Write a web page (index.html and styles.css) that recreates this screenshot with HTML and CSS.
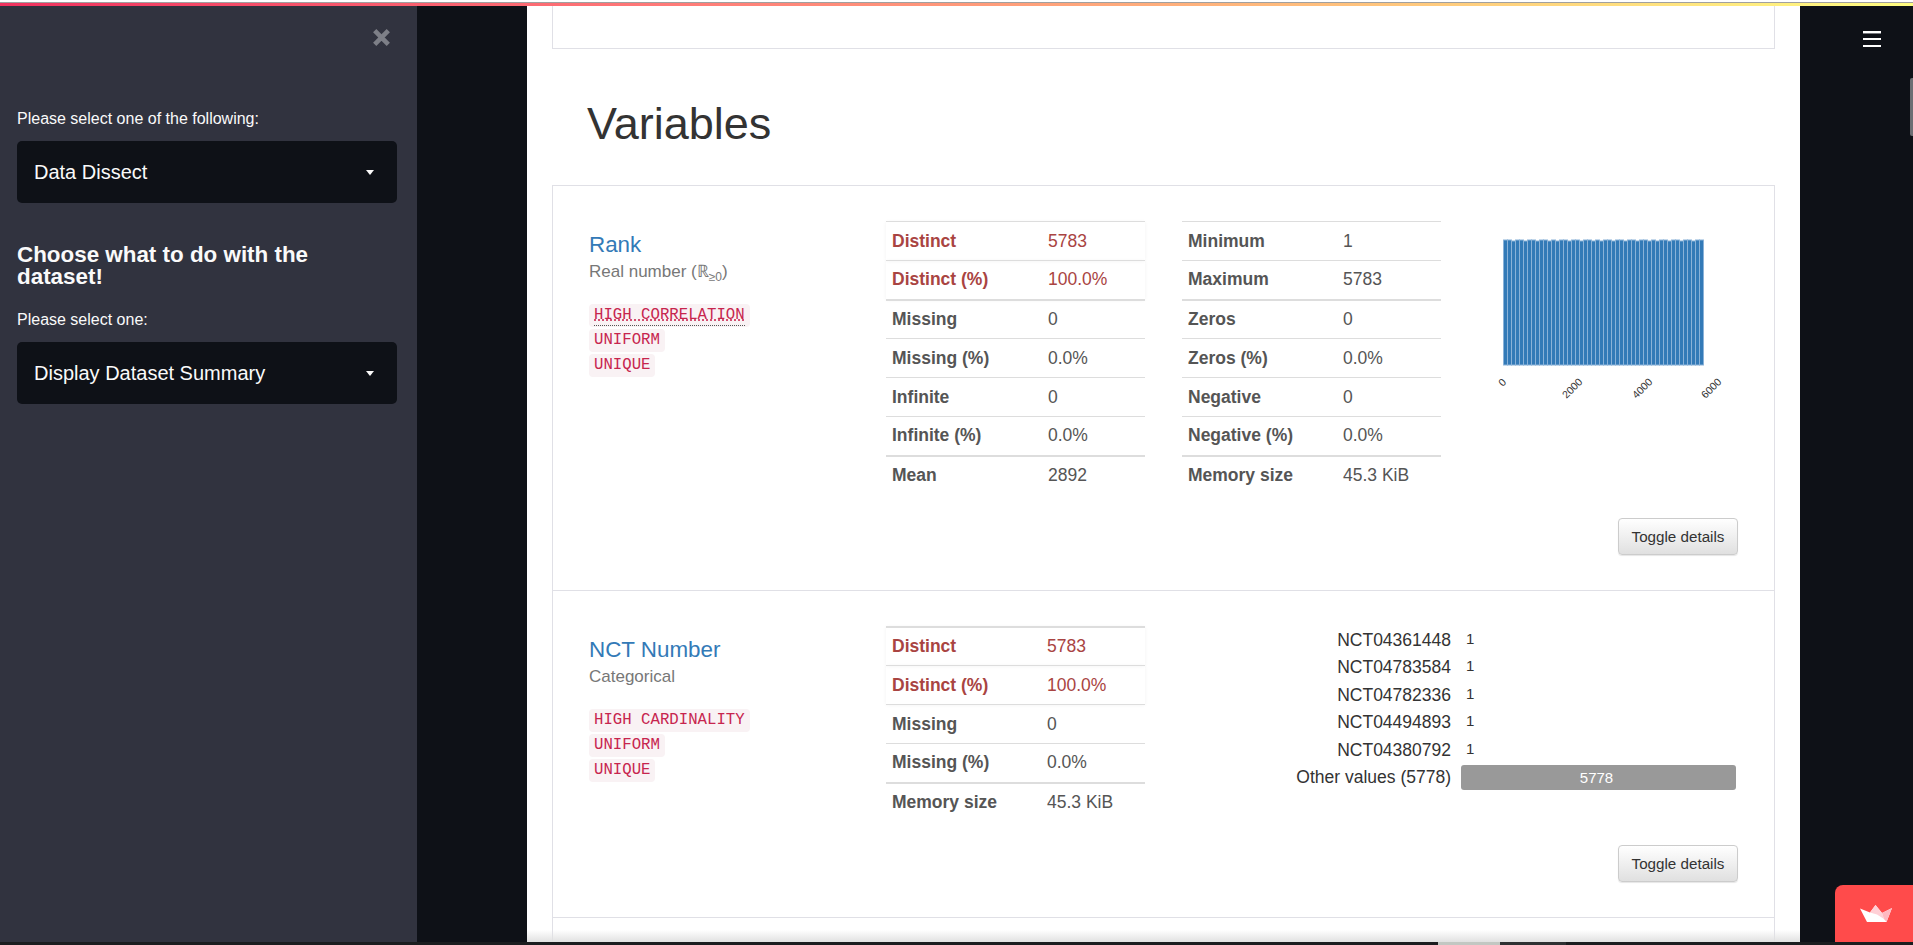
FILE: index.html
```html
<!DOCTYPE html>
<html lang="en">
<head>
    <meta charset="UTF-8">
    <meta name="viewport" content="width=device-width, initial-scale=1.0">
    <title>Data Dissect</title>
    <link rel="stylesheet" href="styles.css">
</head>
<body>
    <div class="top-line"></div>

    <div class="app">
        <aside class="sidebar">
            <div class="sidebar-close">
                <svg width="17" height="17" viewBox="0 0 17 17">
                    <path d="M1.7 1.7 15.3 15.3M15.3 1.7 1.7 15.3" stroke="#7d7f87" stroke-width="4.6" fill="none"/>
                </svg>
            </div>
            <p class="field-label first-label">Please select one of the following:</p>
            <div class="select-box">
                <span>Data Dissect</span>
                <i class="select-arrow"></i>
            </div>
            <h3 class="sidebar-title">Choose what to do with the dataset!</h3>
            <p class="field-label">Please select one:</p>
            <div class="select-box">
                <span>Display Dataset Summary</span>
                <i class="select-arrow"></i>
            </div>
        </aside>

        <div class="gutter-left"></div>

        <main class="report">
            <div class="old-card"></div>
            <h1 class="report-title">Variables</h1>

            <div class="card">
                <!-- Rank -->
                <section class="variable">
                    <div class="variable-grid">
                        <div class="variable-info">
                            <a class="variable-name" href="#">Rank</a>
                            <div class="variable-type">Real number (ℝ<sub>≥0</sub>)</div>
                            <div class="badges">
                                <code class="badge"><abbr>HIGH CORRELATION</abbr></code>
                                <code class="badge">UNIFORM</code>
                                <code class="badge">UNIQUE</code>
                            </div>
                        </div>
                        <table class="stats">
                            <tr class="alert"><th>Distinct</th><td>5783</td></tr>
                            <tr class="alert"><th>Distinct (%)</th><td>100.0%</td></tr>
                            <tr class="thick"><th>Missing</th><td>0</td></tr>
                            <tr><th>Missing (%)</th><td>0.0%</td></tr>
                            <tr><th>Infinite</th><td>0</td></tr>
                            <tr><th>Infinite (%)</th><td>0.0%</td></tr>
                            <tr class="thick"><th>Mean</th><td>2892</td></tr>
                        </table>
                        <table class="stats stats-wide">
                            <tr><th>Minimum</th><td>1</td></tr>
                            <tr><th>Maximum</th><td>5783</td></tr>
                            <tr class="thick"><th>Zeros</th><td>0</td></tr>
                            <tr><th>Zeros (%)</th><td>0.0%</td></tr>
                            <tr><th>Negative</th><td>0</td></tr>
                            <tr><th>Negative (%)</th><td>0.0%</td></tr>
                            <tr class="thick"><th>Memory size</th><td>45.3 KiB</td></tr>
                        </table>
                        <svg class="histogram" width="238" height="170" viewBox="0 0 238 170">
                            <g fill="#337ab7" stroke="#8ab2d8" stroke-width="1" transform="translate(0.5 0)">
                                <rect x="0" y="19" width="4" height="125"/><rect x="4" y="19" width="4" height="125"/><rect x="8" y="20" width="4" height="124"/>
                                <rect x="12" y="19" width="4" height="125"/><rect x="16" y="19" width="4" height="125"/><rect x="20" y="20" width="4" height="124"/>
                                <rect x="24" y="19" width="4" height="125"/><rect x="28" y="19" width="4" height="125"/><rect x="32" y="20" width="4" height="124"/>
                                <rect x="36" y="19" width="4" height="125"/><rect x="40" y="19" width="4" height="125"/><rect x="44" y="20" width="4" height="124"/>
                                <rect x="48" y="19" width="4" height="125"/><rect x="52" y="20" width="4" height="124"/><rect x="56" y="19" width="4" height="125"/>
                                <rect x="60" y="19" width="4" height="125"/><rect x="64" y="20" width="4" height="124"/><rect x="68" y="19" width="4" height="125"/>
                                <rect x="72" y="19" width="4" height="125"/><rect x="76" y="20" width="4" height="124"/><rect x="80" y="19" width="4" height="125"/>
                                <rect x="84" y="19" width="4" height="125"/><rect x="88" y="20" width="4" height="124"/><rect x="92" y="19" width="4" height="125"/>
                                <rect x="96" y="20" width="4" height="124"/><rect x="100" y="19" width="4" height="125"/><rect x="104" y="19" width="4" height="125"/>
                                <rect x="108" y="20" width="4" height="124"/><rect x="112" y="19" width="4" height="125"/><rect x="116" y="19" width="4" height="125"/>
                                <rect x="120" y="20" width="4" height="124"/><rect x="124" y="19" width="4" height="125"/><rect x="128" y="19" width="4" height="125"/>
                                <rect x="132" y="20" width="4" height="124"/><rect x="136" y="19" width="4" height="125"/><rect x="140" y="19" width="4" height="125"/>
                                <rect x="144" y="20" width="4" height="124"/><rect x="148" y="19" width="4" height="125"/><rect x="152" y="20" width="4" height="124"/>
                                <rect x="156" y="19" width="4" height="125"/><rect x="160" y="19" width="4" height="125"/><rect x="164" y="20" width="4" height="124"/>
                                <rect x="168" y="19" width="4" height="125"/><rect x="172" y="19" width="4" height="125"/><rect x="176" y="20" width="4" height="124"/>
                                <rect x="180" y="19" width="4" height="125"/><rect x="184" y="19" width="4" height="125"/><rect x="188" y="20" width="4" height="124"/>
                                <rect x="192" y="19" width="4" height="125"/><rect x="196" y="19" width="4" height="125"/>
                            </g>
                            <g class="tick-labels">
                                <text transform="translate(-1 161) rotate(-45)">0</text>
                                <text transform="translate(69 167) rotate(-45)">2000</text>
                                <text transform="translate(139 167) rotate(-45)">4000</text>
                                <text transform="translate(208 167) rotate(-45)">6000</text>
                            </g>
                        </svg>
                    </div>
                    <div class="variable-actions"><button class="toggle-btn" type="button">Toggle details</button></div>
                </section>

                <!-- NCT Number -->
                <section class="variable">
                    <div class="variable-grid">
                        <div class="variable-info">
                            <a class="variable-name" href="#">NCT Number</a>
                            <div class="variable-type">Categorical</div>
                            <div class="badges">
                                <code class="badge">HIGH CARDINALITY</code>
                                <code class="badge">UNIFORM</code>
                                <code class="badge">UNIQUE</code>
                            </div>
                        </div>
                        <table class="stats stats-cat">
                            <tr class="alert thick"><th>Distinct</th><td>5783</td></tr>
                            <tr class="alert"><th>Distinct (%)</th><td>100.0%</td></tr>
                            <tr><th>Missing</th><td>0</td></tr>
                            <tr><th>Missing (%)</th><td>0.0%</td></tr>
                            <tr class="thick"><th>Memory size</th><td>45.3 KiB</td></tr>
                        </table>
                        <div class="freq-list">
                            <div class="freq-name">NCT04361448</div><div class="freq-count">1</div>
                            <div class="freq-name">NCT04783584</div><div class="freq-count">1</div>
                            <div class="freq-name">NCT04782336</div><div class="freq-count">1</div>
                            <div class="freq-name">NCT04494893</div><div class="freq-count">1</div>
                            <div class="freq-name">NCT04380792</div><div class="freq-count">1</div>
                            <div class="freq-name">Other values (5778)</div><div class="freq-bar">5778</div>
                        </div>
                    </div>
                    <div class="variable-actions"><button class="toggle-btn" type="button">Toggle details</button></div>
                </section>
            </div>
            <div class="report-fade"></div>
        </main>

        <div class="gutter-right">
            <div class="hamburger"><span></span><span></span><span></span></div>
        </div>
    </div>

    <div class="bottom-bar">
        <div class="bottom-thumb"></div>
        <div class="bottom-track"></div>
    </div>

    <div class="page-scroll"></div>
    <div class="crown-btn">
        <svg width="32" height="17" viewBox="0 0 32 17">
            <path d="M0 3.5 10 7.5 15.5 0 22 8 32 3 26.5 17H7Z" fill="#fff"/>
            <path d="M15.5 0 22 8 24 14 17 9.5 10 7.5Z" fill="#ffd0d6"/>
            <path d="M32 3 26.5 17 24 14 22 8Z" fill="#ffb8c0"/>
        </svg>
    </div>
</body>
</html>
```

FILE: styles.css
```css
* {
    box-sizing: border-box;
}

html, body {
    margin: 0;
    height: 100%;
    overflow: hidden;
}

body {
    font-family: "Liberation Sans", Arial, sans-serif;
    background-color: #0e1117;
    display: flex;
    flex-direction: column;
}

.top-line {
    flex: none;
    height: 6px;
    border-top: 2px solid #fff;
    background: linear-gradient(90deg, #f0325f 0%, #ff7a78 35%, #fffd80 100%);
    box-shadow: inset 0 1px 0 #a0a0a0;
}

.app {
    flex: 1;
    display: flex;
    min-height: 0;
}

/* sidebar */
.sidebar {
    flex: none;
    width: 417px;
    background-color: #31333f;
    padding: 23px 20px 0 17px;
    color: #fafafa;
}

.sidebar-close {
    display: flex;
    justify-content: flex-end;
    padding-right: 7px;
    height: 17px;
}

.field-label {
    margin: 0 0 12px;
    font-size: 16px;
    line-height: 20px;
}

.first-label {
    margin-top: 63px;
}

.select-box {
    display: flex;
    align-items: center;
    justify-content: space-between;
    height: 62px;
    padding: 0 23px 0 17px;
    background-color: #0e1117;
    border-radius: 5px;
    font-size: 20px;
}

.select-arrow {
    width: 0;
    height: 0;
    border-left: 4.5px solid transparent;
    border-right: 4.5px solid transparent;
    border-top: 5px solid #fafafa;
}

.sidebar-title {
    margin: 41px 0 22px;
    font-size: 22.4px;
    line-height: 22px;
    font-weight: bold;
}

.gutter-left {
    flex: none;
    width: 110px;
}

.gutter-right {
    flex: 1;
    display: flex;
    justify-content: flex-end;
    padding: 25px 32px 0 0;
}

.hamburger {
    width: 18px;
    display: flex;
    flex-direction: column;
    gap: 5px;
}

.hamburger span {
    display: block;
    height: 2px;
    background-color: #fff;
}

.hamburger span:first-child {
    box-shadow: 0 1px 0 #77797e;
}

/* report */
.report {
    position: relative;
    flex: none;
    width: 1273px;
    height: 100%;
    padding: 0 25px;
    background-color: #fff;
    color: #333;
    overflow: hidden;
}

.old-card {
    height: 43px;
    border: 1px solid #e0e0e6;
    border-top: none;
}

.report-title {
    margin: 0;
    padding: 0 0 0 35px;
    height: 136px;
    line-height: 150px;
    font-size: 45px;
    font-weight: normal;
}

.card {
    min-height: 900px;
    border: 1px solid #e0e0e6;
    border-bottom: none;
}

.variable {
    padding: 35px 36px 35px 36px;
    border-bottom: 1px solid #e0e0e6;
}

.variable-grid {
    display: grid;
    grid-template-columns: 297px 296px 259px 1fr;
}

.variable-info {
    padding-top: 10px;
}

.variable-name {
    display: block;
    color: #337ab7;
    text-decoration: none;
    font-size: 22.4px;
    line-height: 28px;
}

.variable-type {
    margin-top: 2px;
    color: #777;
    font-size: 17px;
    line-height: 22px;
}

.variable-type sub {
    font-size: 12px;
    line-height: 0;
}

.badges {
    margin-top: 21px;
    display: flex;
    flex-direction: column;
    align-items: flex-start;
    gap: 2px;
}

.badge {
    display: block;
    height: 23px;
    padding: 0 5px;
    font-family: "Liberation Mono", "Courier New", monospace;
    font-size: 15.7px;
    line-height: 23px;
    color: #c7254e;
    background-color: #f9f2f4;
    border-radius: 4px;
}

.badge abbr {
    display: block;
    height: 22px;
    border-bottom: 1px dotted #555;
    line-height: 23px;
    text-decoration: underline dotted #c7254e;
}

.stats {
    width: 259px;
    border-collapse: collapse;
    font-size: 17.5px;
    color: #555;
    align-self: start;
}

.stats tr {
    height: 39px;
    border-top: 1px solid #ddd;
}

.stats tr.thick {
    border-top: 2px solid #ddd;
}

.stats th {
    width: 162px;
    padding: 0 0 0 6px;
    text-align: left;
    font-weight: bold;
}

.stats td {
    padding: 0;
}

.stats-wide th {
    width: 161px;
}

.stats-cat th {
    width: 161px;
}

.stats .alert {
    color: #a94442;
    box-shadow: 0 0 4px rgba(0, 0, 0, 0.05);
}

.histogram {
    margin: 0 0 0 62px;
    overflow: visible;
}

.tick-labels {
    font-size: 10.5px;
    fill: #333;
    text-anchor: middle;
    dominant-baseline: central;
}

.freq-list {
    grid-column: 3 / 5;
    display: grid;
    grid-template-columns: 269px 277px;
    column-gap: 10px;
    font-size: 17.5px;
    color: #333;
    padding-top: 1px;
    align-self: start;
}

.freq-name {
    height: 27.5px;
    line-height: 27px;
    text-align: right;
}

.freq-count {
    height: 27.5px;
    padding-left: 5px;
    font-size: 15px;
    line-height: 24px;
}

.freq-bar {
    height: 25px;
    width: 275px;
    margin-top: 1px;
    padding-right: 4px;
    background-color: #999;
    border-radius: 3px;
    color: #fff;
    font-size: 15px;
    line-height: 26px;
    text-align: center;
}

.variable-actions {
    display: flex;
    justify-content: flex-end;
    margin-top: 23px;
}

.toggle-btn {
    width: 120px;
    height: 37px;
    padding: 0;
    font-family: inherit;
    font-size: 15.2px;
    color: #333;
    background: linear-gradient(#fff, #e0e0e0);
    border: 1px solid #ccc;
    border-radius: 4px;
    box-shadow: 0 1px 1px rgba(0, 0, 0, 0.1);
}

.report-fade {
    position: absolute;
    left: 0;
    right: 0;
    bottom: 0;
    height: 12px;
    background: linear-gradient(rgba(225, 225, 225, 0), rgba(225, 225, 225, 1));
}

.bottom-bar {
    flex: none;
    height: 3px;
    display: flex;
    padding-left: 1438px;
    background-color: #1b1d1f;
}

.bottom-thumb {
    width: 62px;
    background-color: #c2c7c2;
}

.bottom-track {
    width: 66px;
    background-color: #2e3032;
}

/* overlays */
.page-scroll {
    position: absolute;
    top: 78px;
    right: 0;
    width: 3px;
    height: 58px;
    background-color: #6c6e73;
    border-radius: 2px 0 0 2px;
}

.crown-btn {
    position: absolute;
    top: 885px;
    right: 0;
    width: 78px;
    height: 57px;
    padding: 20px 0 0 25px;
    background-color: #ff4b4b;
    border-top-left-radius: 8px;
}
```
